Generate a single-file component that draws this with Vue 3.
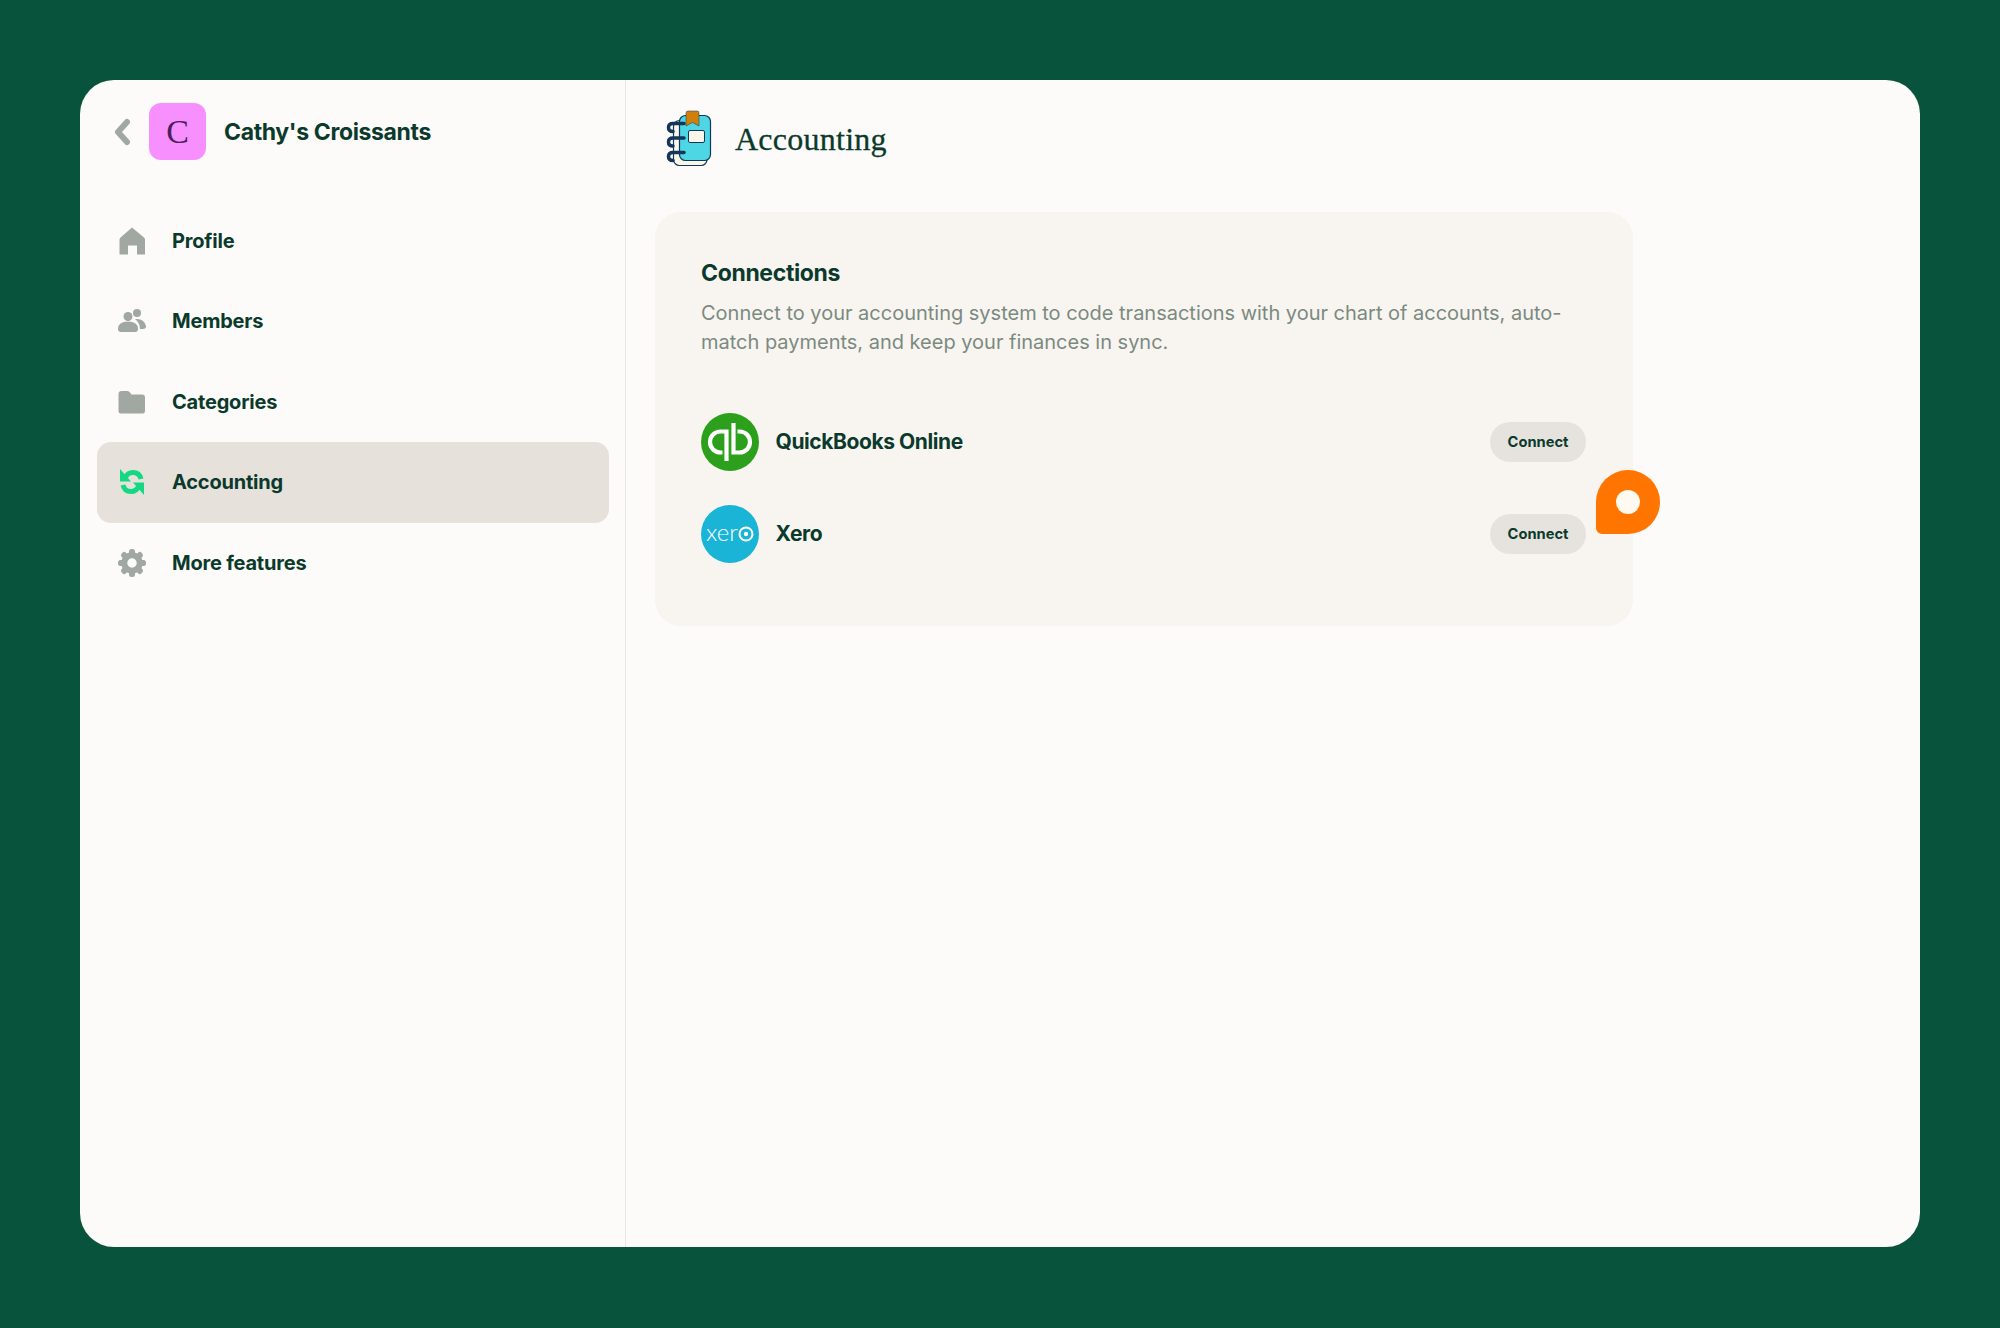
<script setup>
const navItems = [
  { label: 'Profile', icon: 'home' },
  { label: 'Members', icon: 'members' },
  { label: 'Categories', icon: 'folder' },
  { label: 'Accounting', icon: 'sync', active: true },
  { label: 'More features', icon: 'gear' }
]
const gearTeeth = [0, 45, 90, 135, 180, 225, 270, 315]
const connections = [
  { name: 'QuickBooks Online', logo: 'qb' },
  { name: 'Xero', logo: 'xero' }
]
</script>

<template>
  <div class="page">
    <div class="panel">
      <aside class="sidebar">
        <div class="org">
          <svg class="back" width="20" height="28" viewBox="0 0 20 28">
            <path d="M15 4 6 14l9 10" fill="none" stroke="#a1a8a2" stroke-width="6" stroke-linecap="round" stroke-linejoin="round" />
          </svg>
          <div class="avatar">C</div>
          <div class="org-name">Cathy's Croissants</div>
        </div>
        <nav class="nav">
          <div v-for="item in navItems" :key="item.label" class="nav-item" :class="{ active: item.active }">
            <svg class="nav-icon" width="28" height="28" viewBox="0 0 28 28">
              <path v-if="item.icon === 'home'" fill-rule="evenodd" d="M14 .5 26 10.5q1 .8 1 2V27.500H19V18.500H10V27.500H1.500V12.500q0-1.200 1-2z" fill="#a1a8a2" />
              <g v-else-if="item.icon === 'members'" fill="#a1a8a2">
                <circle cx="19" cy="6" r="4" />
                <path d="M17 12q9-1 11 7 .3 3-3 3h-3q0-6-5-10z" />
                <circle cx="10" cy="9.500" r="4.500" />
                <path d="M0 22q0-7.500 10-7.500T20 22q0 3-3 3H3q-3 0-3-3z" />
              </g>
              <path v-else-if="item.icon === 'folder'" d="M1 6.500q0-3 3-3h6q1.500 0 2.500 1.500l1.500 2h10.500q3 0 3 3V23q0 3-2 3H3q-2 0-2-2.500z" fill="#a1a8a2" transform="translate(-.5 -.5)" />
              <g v-else-if="item.icon === 'sync'" fill="#14d982">
                <path d="M7.500 9.500Q9.500 4.500 15 4.500 21.500 4.500 23 11" fill="none" stroke="#14d982" stroke-width="5" />
                <path d="M2 1 2 13.500 13 13.500 Z" />
                <path d="M20.500 18.500Q18.500 23.500 13 23.500 6.500 23.500 5 17" fill="none" stroke="#14d982" stroke-width="5" />
                <path d="M26 27 26 14.500 15 14.500 Z" />
              </g>
              <g v-else fill="#a1a8a2">
                <rect v-for="a in gearTeeth" :key="a" x="11" y="0" width="6" height="7" rx="2.500" :transform="`rotate(${a} 14 14)`" />
                <circle cx="14" cy="14" r="7.750" fill="none" stroke="#a1a8a2" stroke-width="6" />
              </g>
            </svg>
            <span>{{ item.label }}</span>
          </div>
        </nav>
      </aside>

      <main class="main">
        <header class="main-header">
          <svg width="52" height="62" viewBox="0 0 52 62">
            <rect x="9.500" y="12.500" width="33.500" height="45" rx="6" fill="#fbf6ea" stroke="#14365a" stroke-width="1.200" />
            <rect x="15.500" y="7.500" width="31" height="45" rx="6" fill="#4dd6e3" stroke="#14365a" stroke-width="1.200" />
            <path d="M22 5q0-2 2-2h9q2 0 2 2v13l-6.500-3.500L22 18z" fill="#cf7f0a" stroke="#14365a" stroke-width=".5" />
            <rect x="24.500" y="22.500" width="16" height="12" rx="1.500" fill="#fbf6ea" stroke="#14365a" stroke-width="1" />
            <g fill="none" stroke="#14365a" stroke-width="3.500" stroke-linecap="round">
              <path d="M20 15.500H9Q4.500 15.500 4.500 19.500T9 23.500" />
              <path d="M20 30H9Q4.500 30 4.500 34T9 38" />
              <path d="M20 44.500H9Q4.500 44.500 4.500 48.500T9 52.500" />
            </g>
          </svg>
          <h1 class="main-title">Accounting</h1>
        </header>

        <section class="card">
          <h2 class="card-title">Connections</h2>
          <p class="card-desc">Connect to your accounting system to code transactions with your chart of accounts, auto-<br>match payments, and keep your finances in sync.</p>
          <div class="rows">
            <div v-for="c in connections" :key="c.name" class="row">
              <svg width="58" height="58" viewBox="0 0 58 58">
                <template v-if="c.logo === 'qb'">
                  <circle cx="29" cy="29" r="29" fill="#2ca01c" />
                  <g fill="none" stroke="#fff" stroke-width="4.200">
                    <path d="M21.500 39.500H19.500a10.500 10.500 0 0 1 0-21H25.500V48" />
                    <path d="M36.500 18.500H38.500a10.500 10.500 0 0 1 0 21H32.500V10" />
                  </g>
                </template>
                <template v-else>
                  <circle cx="29" cy="29" r="29" fill="#1ab4d7" />
                  <text x="5" y="36" class="xero-text">xer</text>
                  <circle cx="45" cy="29" r="6.500" fill="none" stroke="#fff" stroke-width="2" />
                  <circle cx="45" cy="29" r="2.200" fill="#fff" />
                </template>
              </svg>
              <span class="row-name">{{ c.name }}</span>
              <button class="connect">Connect</button>
            </div>
          </div>
          <div class="marker"><span class="marker-dot"></span></div>
        </section>
      </main>
    </div>
  </div>
</template>

<style>
body {
  margin: 0;
  background: #08533b;
}
</style>

<style scoped>
.page {
  box-sizing: border-box;
  height: 1328px;
  padding: 80px;
  background: #08533b;
  font-family: Inter, "Liberation Sans", sans-serif;
  color: #0b3a2c;
}
.panel {
  display: flex;
  height: 1167px;
  background: #fcfbf9;
  border-radius: 34px;
  overflow: hidden;
}
.sidebar {
  box-sizing: border-box;
  width: 546px;
  flex: none;
  border-right: 1px solid #e9e5df;
  padding: 23px 16px 0 17px;
}
.org {
  display: flex;
  align-items: center;
  height: 57px;
  padding-left: 15px;
}
.back {
  flex: none;
}
.avatar {
  width: 57px;
  height: 57px;
  flex: none;
  margin-left: 17px;
  border-radius: 12px;
  background: #f78fff;
  color: #4b1f5e;
  font: 34px/57px "Liberation Serif", serif;
  text-align: center;
}
.org-name {
  margin-left: 18px;
  font-size: 23px;
  font-weight: 700;
  letter-spacing: -0.35px;
}
.nav {
  margin-top: 40.5px;
}
.nav-item {
  display: flex;
  align-items: center;
  gap: 26px;
  height: 80.5px;
  padding-left: 21px;
  border-radius: 14px;
  font-size: 20px;
  font-weight: 700;
  letter-spacing: -0.2px;
}
.nav-item.active {
  background: #e6e1db;
}
.nav-icon {
  flex: none;
}
.main {
  flex: 1;
  padding: 28px 29px;
}
.main-header {
  display: flex;
  align-items: center;
  gap: 19px;
  margin-left: 9px;
  height: 62px;
}
.main-title {
  margin: 0;
  font: 400 32px/1 "Liberation Serif", serif;
  letter-spacing: 0.25px;
  -webkit-text-stroke: 0.3px #0b3a2c;
  color: #0b3a2c;
}
.card {
  position: relative;
  box-sizing: border-box;
  width: 978px;
  height: 414px;
  margin-top: 42px;
  padding: 47px 47px 0 46px;
  background: #f8f5f1;
  border-radius: 26px;
}
.card-title {
  margin: 0;
  font-size: 23px;
  font-weight: 700;
  line-height: 28px;
  letter-spacing: -0.35px;
}
.card-desc {
  margin: 12px 0 0;
  font-size: 20px;
  letter-spacing: -0.01px;
  line-height: 29px;
  color: #7b8a80;
  white-space: nowrap;
}
.rows {
  display: flex;
  flex-direction: column;
  gap: 34px;
  margin-top: 56px;
}
.row {
  display: flex;
  align-items: center;
  gap: 16.500px;
  height: 58px;
}
.row-name {
  flex: 1;
  position: relative;
  top: -1px;
  font-size: 21px;
  font-weight: 700;
  letter-spacing: -0.42px;
}
.xero-text {
  font-family: Lato, sans-serif;
  font-size: 24px;
  font-weight: 300;
  fill: #fff;
}
.connect {
  width: 96px;
  height: 40px;
  padding: 0;
  border: 0;
  border-radius: 20px;
  background: #e6e3df;
  color: #0b3a2c;
  font: 700 14.700px Inter, "Liberation Sans", sans-serif;
}
.marker {
  position: absolute;
  left: 941px;
  top: 258px;
  display: flex;
  align-items: center;
  justify-content: center;
  width: 64px;
  height: 64px;
  background: #ff7500;
  border-radius: 32px 32px 32px 6px;
}
.marker-dot {
  width: 24px;
  height: 24px;
  border-radius: 50%;
  background: #fff9ef;
}
</style>
